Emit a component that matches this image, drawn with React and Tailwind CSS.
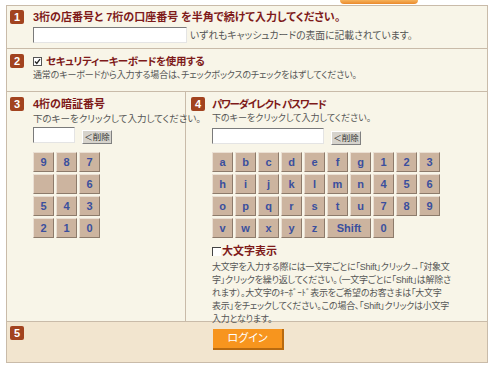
import React from "react";

const jp = "font-['Liberation_Sans','Noto_Sans_CJK_JP',sans-serif] [font-feature-settings:'palt']";

const pinRows = [
  ["9", "8", "7"],
  ["", "", "6"],
  ["5", "4", "3"],
  ["2", "1", "0"],
];

const passKeys = [
  "a", "b", "c", "d", "e", "f", "g", "1", "2", "3",
  "h", "i", "j", "k", "l", "m", "n", "4", "5", "6",
  "o", "p", "q", "r", "s", "t", "u", "7", "8", "9",
  "v", "w", "x", "y", "z", "Shift", "0",
];

const Badge = ({ n }) => (
  <div className="w-[14px] h-[14px] shrink-0 rounded-[2px] bg-[#a2431f] text-white text-[11px] font-bold leading-[14px] text-center font-['Liberation_Sans',sans-serif]">
    {n}
  </div>
);

const Title = ({ children, className = "text-[11px]" }) => (
  <div className={`${jp} ${className} font-bold leading-[14px] whitespace-nowrap text-[#7e1a1a]`}>{children}</div>
);

const Note = ({ children, className = "" }) => (
  <div className={`${jp} leading-[13px] text-[#555] ${className}`}>{children}</div>
);

const Key = ({ label, wide }) => (
  <button
    className={`${wide ? "col-span-2" : ""} h-[20px] bg-[#ccb49f] border border-t-[#eadfd3] border-l-[#eadfd3] border-b-[#8d7b6b] border-r-[#8d7b6b] text-[11px] font-bold text-[#3a4f9e] font-['Liberation_Sans',sans-serif] leading-none`}
  >
    {label}
  </button>
);

const Field = ({ w }) => (
  <div className={`${w} h-[16px] bg-white border border-t-[#7a7a7a] border-l-[#7a7a7a] border-b-[#e4e4e4] border-r-[#e4e4e4]`} />
);

const DelButton = () => (
  <button className={`${jp} w-[30px] h-[14px] mt-[3px] bg-[#d6d3cc] border border-t-white border-l-white border-b-[#808080] border-r-[#808080] text-[8.5px] leading-none text-[#333]`}>
    ＜削除
  </button>
);

export default function App() {
  return (
    <div className="w-[500px] h-[367px] bg-white overflow-hidden">
      <div className="h-[5px] pl-[340px]">
        <div className="w-[78px] h-[4px] bg-gradient-to-b from-[#f6b25a] to-[#e9892a] rounded-b-[40px]" />
      </div>
      <div className="ml-[6px] w-[482px] border border-[#c9bba9] bg-[#f8f5e8]">
        {/* 1 */}
        <div className="h-[43px] border-b border-[#c9bba9] flex gap-[9px] pl-[3px] pt-[4px]">
          <Badge n="1" />
          <div>
            <Title>3桁の店番号と 7桁の口座番号 を半角で続けて入力してください。</Title>
            <div className="flex items-center gap-[3px] mt-[3px]">
              <Field w="w-[154px]" />
              <Note className="text-[9.8px] whitespace-nowrap">いずれもキャッシュカードの表面に記載されています。</Note>
            </div>
          </div>
        </div>

        {/* 2 */}
        <div className="h-[43px] border-b border-[#c9bba9] flex gap-[9px] pl-[3px] pt-[5px]">
          <Badge n="2" />
          <div>
            <div className="flex items-center gap-[4px]">
              <svg width="9" height="9" viewBox="0 0 9 9">
                <rect x="0.5" y="0.5" width="8" height="8" fill="#fff" stroke="#555" />
                <path d="M2 4.5 L3.8 6.5 L7 2.2" fill="none" stroke="#222" strokeWidth="1.3" />
              </svg>
              <Title className="text-[10.5px] tracking-[-0.4px]">セキュリティーキーボードを使用する</Title>
            </div>
            <Note className="mt-[1px] text-[9px] tracking-[-0.15px] whitespace-nowrap">
              通常のキーボードから入力する場合は、チェックボックスのチェックをはずしてください。
            </Note>
          </div>
        </div>

        {/* 3 / 4 */}
        <div className="h-[230px] border-b border-[#c9bba9] flex">
          <div className="w-[179px] border-r border-[#c9bba9] flex gap-[9px] pl-[3px] pt-[5px]">
            <Badge n="3" />
            <div>
              <Title>4桁の暗証番号</Title>
              <Note className="mt-[1px] text-[9.5px] whitespace-nowrap">下のキーをクリックして入力してください。</Note>
              <div className="flex gap-[7px] mt-[2px]">
                <Field w="w-[42px]" />
                <DelButton />
              </div>
              <div className="grid grid-cols-[repeat(3,21px)] gap-[2px] mt-[8px]">
                {pinRows.flat().map((k, i) => (
                  <Key key={i} label={k} />
                ))}
              </div>
            </div>
          </div>
          <div className="flex-1 flex gap-[7px] pl-[5px] pt-[5px]">
            <Badge n="4" />
            <div>
              <Title className="text-[10.5px] tracking-[-1.2px]">パワーダイレクト パスワード</Title>
              <Note className="mt-[1px] text-[9px] whitespace-nowrap">下のキーをクリックして入力してください。</Note>
              <div className="flex gap-[7px] mt-[3px]">
                <Field w="w-[112px]" />
                <DelButton />
              </div>
              <div className="grid grid-cols-[repeat(10,21px)] gap-[2px] mt-[7px]">
                {passKeys.map((k) => (
                  <Key key={k} label={k} wide={k === "Shift"} />
                ))}
              </div>
              <div className="flex items-center gap-[1px] mt-[6px]">
                <div className="w-[9px] h-[9px] bg-white border-t border-l border-[#444]" />
                <Title>大文字表示</Title>
              </div>
              <Note className="mt-[3px] text-[9px] tracking-[-0.25px] whitespace-nowrap">
                大文字を入力する際には一文字ごとに「Shift」クリック→「対象文
                <br />
                字」クリックを繰り返してください。（一文字ごとに「Shift」は解除さ
                <br />
                れます）。大文字のｷｰﾎﾞｰﾄﾞ表示をご希望のお客さまは「大文字
                <br />
                表示」をチェックしてください。この場合、「Shift」クリックは小文字
                <br />
                入力となります。
              </Note>
            </div>
          </div>
        </div>

        {/* 5 */}
        <div className="h-[40px] bg-[#f2e5cf] grid grid-cols-[1fr_auto_1fr] pl-[3px] pt-[4px]">
          <Badge n="5" />
          <button className={`${jp} w-[71px] h-[21px] mt-[3px] bg-[#f7951e] border-r-2 border-b-2 border-[#b86a10] text-white text-[11px] leading-none`}>
            ログイン
          </button>
          <div />
        </div>
      </div>
    </div>
  );
}
